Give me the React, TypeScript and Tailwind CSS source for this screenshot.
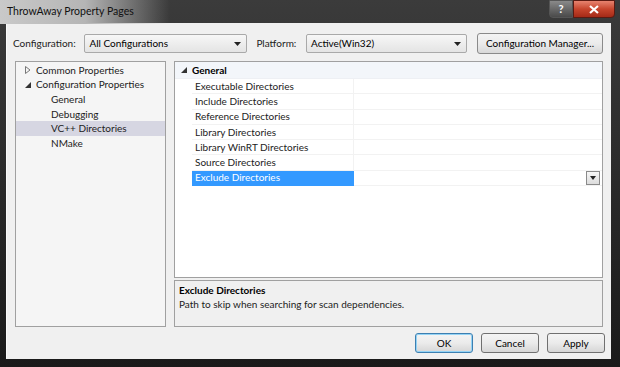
import React from "react";

const FONT = { fontFamily: "Lato, 'Liberation Sans', sans-serif" };

const TREE = [
  { label: "Common Properties", level: 0, arrow: "closed" },
  { label: "Configuration Properties", level: 0, arrow: "open" },
  { label: "General", level: 1 },
  { label: "Debugging", level: 1 },
  { label: "VC++ Directories", level: 1, selected: true },
  { label: "NMake", level: 1 },
];

const PROPS = [
  "Executable Directories",
  "Include Directories",
  "Reference Directories",
  "Library Directories",
  "Library WinRT Directories",
  "Source Directories",
  "Exclude Directories",
];

const Combo: React.FC<{ text: string; width: string }> = ({ text, width }) => (
  <div
    className={`${width} h-[19px] flex items-center justify-between border border-[#a9a9a9] bg-gradient-to-b from-[#f7f7f7] to-[#e4e4e4] rounded-[2px] pl-[4px] pr-[5px]`}
  >
    <span>{text}</span>
    <svg width="7" height="4" viewBox="0 0 7 4">
      <path d="M0 0h7L3.5 4z" fill="#222" />
    </svg>
  </div>
);

const Button: React.FC<{ text: string; isDefault?: boolean }> = ({ text, isDefault }) => (
  <div
    className={`w-[58px] h-[20px] flex items-center justify-center rounded-[3px] border ${
      isDefault ? "border-[#3c7fb1] shadow-[inset_0_0_0_1px_#94d3f5]" : "border-[#707070]"
    } bg-gradient-to-b from-[#f4f4f4] via-[#ebebeb] to-[#d6d6d6]`}
  >
    {text}
  </div>
);

export default function App() {
  return (
    <div
      className="w-[620px] h-[367px] flex flex-col bg-gradient-to-b from-[#3b3b3b] via-[#2a2a2a] to-[#1a1a1a] text-[10px] text-black"
      style={FONT}
    >
      {/* title bar */}
      <div className="h-[23px] flex items-start relative">
        <div className="absolute left-0 top-0 w-[170px] h-[24px] bg-gradient-to-r from-[#c9c9c9] via-[#b5b5b5] to-transparent" />
        <span className="relative ml-[7px] mt-[4px] text-[#111] text-[10.5px]">ThrowAway Property Pages</span>
        <div className="relative ml-auto mr-[5px] flex">
          <div className="w-[24px] h-[18px] flex items-center justify-center border border-[#555] rounded-bl-[4px] bg-gradient-to-b from-[#8a8a8a] to-[#4a4a4a] text-white font-bold text-[11px]">
            ?
          </div>
          <div className="w-[42px] h-[18px] flex items-center justify-center border border-[#5a1a12] rounded-br-[4px] bg-gradient-to-b from-[#e7836f] via-[#c7452d] to-[#a52a17]">
            <svg width="10" height="9" viewBox="0 0 10 9">
              <path d="M1 1l8 7M9 1L1 8" stroke="#fff" strokeWidth="2.2" />
            </svg>
          </div>
        </div>
      </div>

      {/* client */}
      <div className="flex-1 ml-[6px] mr-[9px] mb-[8px] bg-[#f0f0f0] border-l border-[#fafafa] flex flex-col px-[8px]">
        {/* config row */}
        <div className="flex items-center h-[34px] pt-[7px]">
          <span className="ml-[-2px] w-[72px] text-[#222]">Configuration:</span>
          <Combo text="All Configurations" width="w-[164px]" />
          <span className="ml-[9px] w-[50px] text-[#222]">Platform:</span>
          <Combo text="Active(Win32)" width="w-[162px]" />
          <div className="ml-[10px] w-[127px] h-[21px] flex items-center justify-center border border-[#8a8a8a] rounded-[3px] bg-gradient-to-b from-[#f4f4f4] via-[#ebebeb] to-[#d8d8d8]">
            Configuration Manager...
          </div>
        </div>

        {/* panels */}
        <div className="flex gap-[8px] mt-[4px] h-[266px]">
          <div className="w-[151px] border border-[#a0a0a0] bg-[#f5f5f5] pt-[1px]">
            {TREE.map((t) => (
              <div
                key={t.label}
                className={`h-[14.6px] flex items-center ${t.selected ? "bg-[#d6d6e2]" : ""}`}
              >
                <span className="w-[20px] flex justify-center pl-[3px]">
                  {t.arrow === "closed" && (
                    <svg width="6" height="8" viewBox="0 0 6 8">
                      <path d="M0.5 0.5L5 4L0.5 7.5z" fill="none" stroke="#777" />
                    </svg>
                  )}
                  {t.arrow === "open" && (
                    <svg width="6" height="6" viewBox="0 0 6 6">
                      <path d="M6 0V6H0z" fill="#333" />
                    </svg>
                  )}
                </span>
                <span className={t.level === 1 ? "ml-[15px] text-[#222]" : "text-[#222]"}>{t.label}</span>
              </div>
            ))}
          </div>

          <div className="flex-1 flex flex-col gap-[2px]">
            <div className="h-[217px] border border-[#a0a0a0] bg-white flex flex-col">
              <div className="h-[17px] flex items-center bg-[#f3f6fa] border-b border-[#eef0f4]">
                <span className="w-[17px] flex justify-center">
                  <svg width="6" height="6" viewBox="0 0 6 6">
                    <path d="M6 0V6H0z" fill="#333" />
                  </svg>
                </span>
                <span className="font-bold">General</span>
              </div>
              {PROPS.map((p, i) => {
                const sel = i === PROPS.length - 1;
                return (
                  <div key={p} className="h-[15.3px] flex items-stretch">
                    <div className="w-[17px]" />
                    <div
                      className={`w-[162px] flex items-center pl-[3px] border-b border-r ${
                        sel ? "bg-[#3399ff] text-white border-[#3399ff]" : "border-[#f2f2f2] text-[#222]"
                      }`}
                    >
                      {p}
                    </div>
                    <div className="flex-1 flex items-center justify-end pr-[2px] border-b border-[#f2f2f2]">
                      {sel && (
                        <div className="w-[14px] h-[14px] flex items-center justify-center border border-[#8a8a8a] bg-gradient-to-b from-[#f6f6f6] to-[#dcdcdc]">
                          <svg width="6" height="4" viewBox="0 0 6 4">
                            <path d="M0 0h6L3 4z" fill="#222" />
                          </svg>
                        </div>
                      )}
                    </div>
                  </div>
                );
              })}
            </div>
            <div className="flex-1 border border-[#a0a0a0] bg-[#f0f0f0] px-[4px] pt-[2px] leading-[14px]">
              <div className="font-bold">Exclude Directories</div>
              <div className="text-[#222]">Path to skip when searching for scan dependencies.</div>
            </div>
          </div>
        </div>

        {/* buttons */}
        <div className="flex justify-end gap-[8px] mt-[6px] mr-[-2px]">
          <Button text="OK" isDefault />
          <Button text="Cancel" />
          <Button text="Apply" />
        </div>
      </div>
    </div>
  );
}
